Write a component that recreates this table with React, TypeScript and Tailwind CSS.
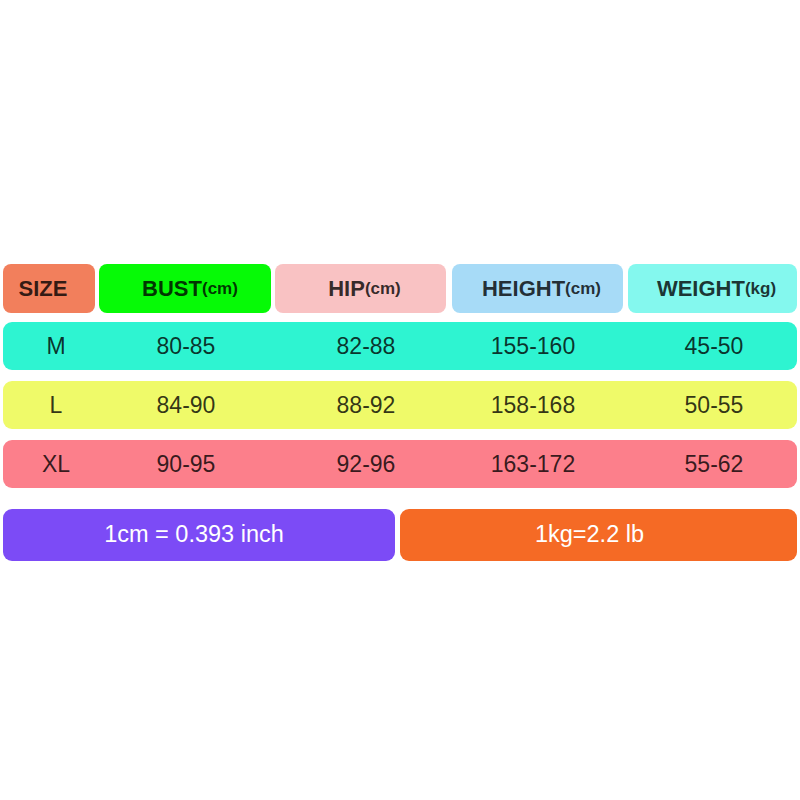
import React from "react";

const rows = [
  { size: "M", vals: ["80-85", "82-88", "155-160", "45-50"], bg: "bg-[#2ef4d1]" },
  { size: "L", vals: ["84-90", "88-92", "158-168", "50-55"], bg: "bg-[#effa69]" },
  { size: "XL", vals: ["90-95", "92-96", "163-172", "55-62"], bg: "bg-[#fc7f8b]" },
];

function Unit({ u }: { u: string }) {
  return <span className="text-[17px] font-bold">{u}</span>;
}

export default function App() {
  return (
    <div
      className="w-[800px] h-[800px] bg-white px-[3px] pt-[264px]"
      style={{ fontFamily: '"Liberation Sans", Arial, sans-serif' }}
    >
      {/* header */}
      <div className="flex h-[49px] text-black/80 font-bold text-[22px] leading-none">
        <div className="w-[92px] rounded-[8px] bg-[#f27f5c] flex items-center justify-center pr-[12px]">
          SIZE
        </div>
        <div className="ml-[4px] w-[172px] rounded-[8px] bg-[#06fa06] flex items-center justify-center pl-[10px]">
          BUST<Unit u="(cm)" />
        </div>
        <div className="ml-[4px] w-[171px] rounded-[8px] bg-[#f9c2c3] flex items-center justify-center pl-[8px]">
          HIP<Unit u="(cm)" />
        </div>
        <div className="ml-[6px] w-[171px] rounded-[8px] bg-[#a7dbf7] flex items-center justify-center pl-[8px]">
          HEIGHT<Unit u="(cm)" />
        </div>
        <div className="ml-[5px] flex-1 rounded-[8px] bg-[#84f8ee] flex items-center justify-center pl-[8px]">
          WEIGHT<Unit u="(kg)" />
        </div>
      </div>

      {/* data rows */}
      <div className="mt-[9px] flex flex-col gap-[11px]">
        {rows.map((r) => (
          <div
            key={r.size}
            className={`${r.bg} h-[48px] rounded-[9px] grid grid-cols-[106px_154px_206px_128px_1fr] items-center text-[23px] leading-none text-black/80`}
          >
            <div className="text-center">{r.size}</div>
            <div className="text-center">{r.vals[0]}</div>
            <div className="text-center">{r.vals[1]}</div>
            <div className="text-center">{r.vals[2]}</div>
            <div className="text-center pl-[34px]">{r.vals[3]}</div>
          </div>
        ))}
      </div>

      {/* conversions */}
      <div className="mt-[21px] flex gap-[5px] h-[52px] text-white text-[23.5px] leading-none">
        <div className="w-[392px] rounded-[9px] bg-[#7c4bf6] flex items-center justify-center pr-[10px]">
          1cm = 0.393 inch
        </div>
        <div className="flex-1 rounded-[9px] bg-[#f56a25] flex items-center justify-center pr-[18px]">
          1kg=2.2 lb
        </div>
      </div>
    </div>
  );
}
